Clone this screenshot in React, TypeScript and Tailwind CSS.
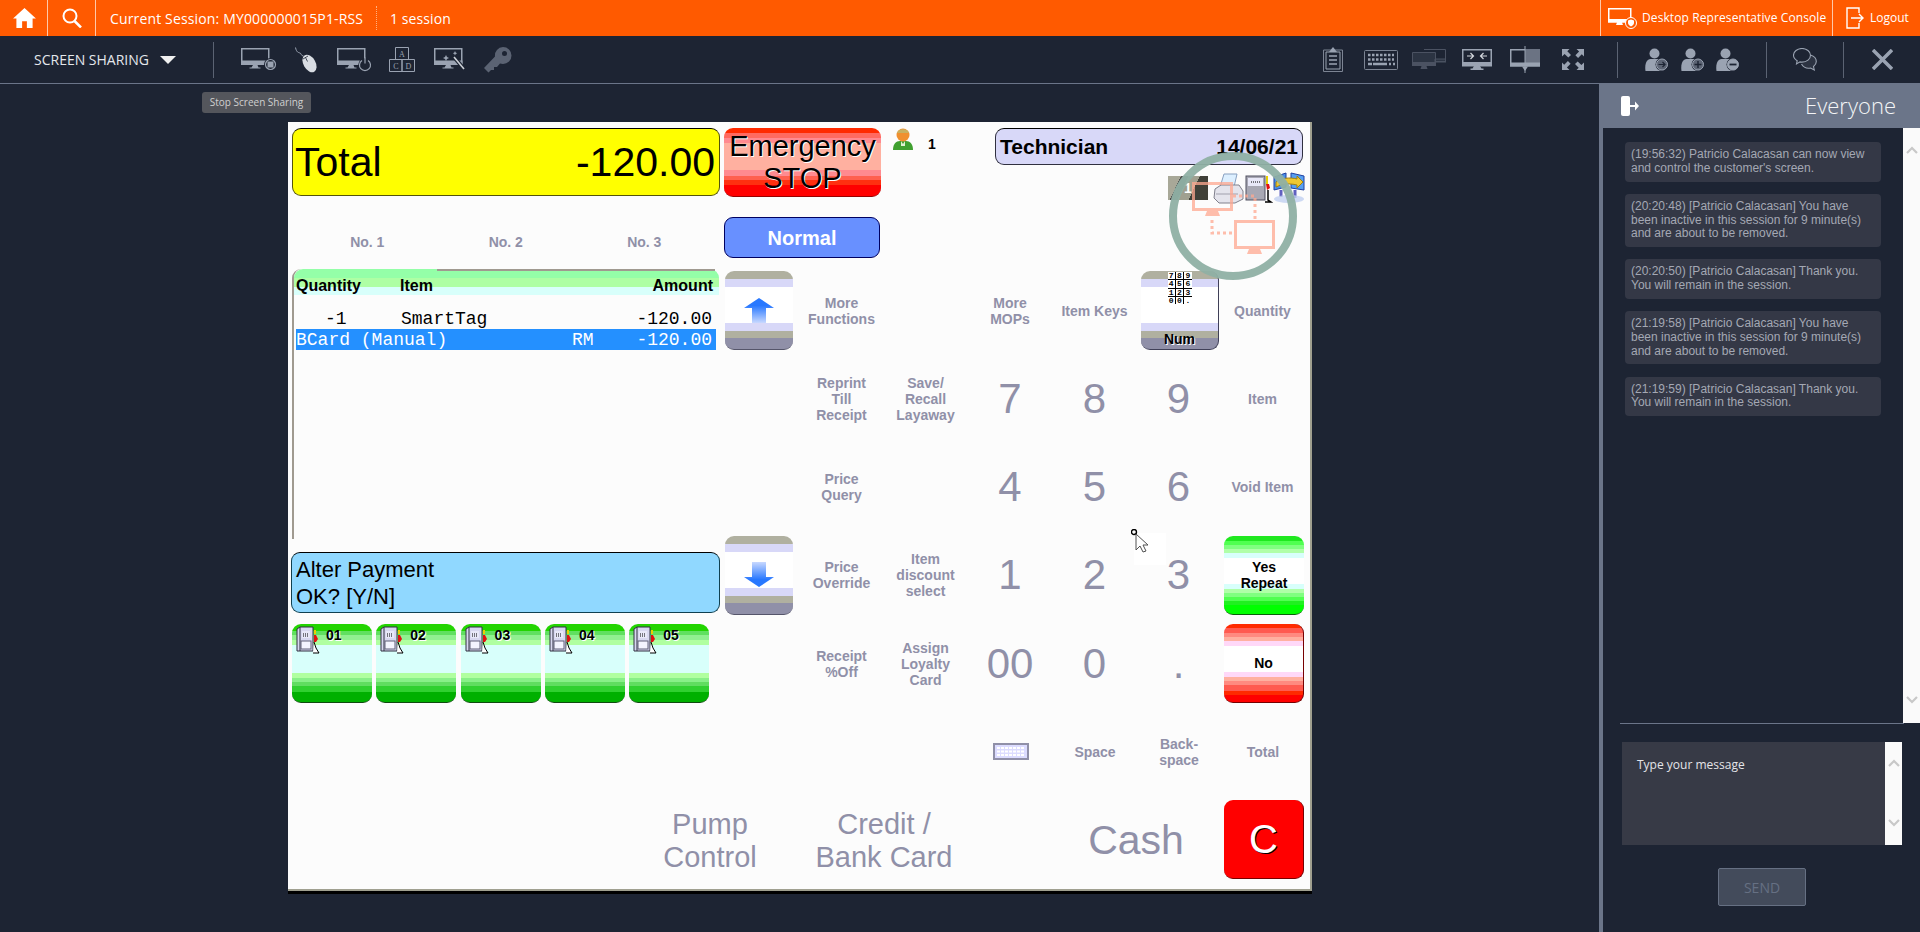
import type { ReactNode } from "react";

const IC = "#9aa3b2";
const DIM = "#4b5262";

const grayBtn =
  "bg-[linear-gradient(#b0b0a0_0_8px,#d8d8f8_8px_16px,#ffffff_16px_52px,#d8d8f8_52px_60px,#b0b0a0_60px_67px,#9090a8_67px)]";
const pumpBtn =
  "bg-[linear-gradient(#22d400_0_7px,#60e060_7px_11px,#90f090_11px_16px,#b0ffa0_16px_21px,#d8fffb_21px_49px,#b0ffa0_49px_54px,#88f088_54px_58px,#60dd60_58px_62px,#30d030_62px_68px,#00b000_68px)]";
const yesBtn =
  "bg-[linear-gradient(#20e820_0_5px,#50ff50_5px_9px,#80ff80_9px_13px,#b0ffa8_13px_17px,#d8fffb_17px_22px,#ffffff_22px_48px,#d8fffb_48px_53px,#b0ffa8_53px_57px,#80ff80_57px_61px,#50ff50_61px_65px,#20f020_65px_69px,#00ff00_69px)]";
const noBtn =
  "bg-[linear-gradient(#ff2a00_0_4px,#ff5a50_4px_9px,#ff8a80_9px_13px,#ffb0a0_13px_17px,#ffd8f8_17px_22px,#ffffff_22px_48px,#ffd8f8_48px_53px,#ffb0a0_53px_57px,#ff8a80_57px_61px,#ff5a50_61px_67px,#ff2a00_67px_71px,#ff0000_71px)]";
const stopBtn =
  "bg-[linear-gradient(#ff2a00_0_5px,#ff6a60_5px_10px,#ff8a90_10px_15px,#ffb0a0_15px_42px,#ff8a90_42px_48px,#ff6050_48px_52px,#ff3010_52px_57px,#ff0000_57px)]";

const MonitorShape = ({ color = IC }: { color?: string }) => (
  <>
    <path d="M.75.75h27v15.5H.75z" fill="none" stroke={color} strokeWidth="1.5" />
    <rect x="0" y="12.5" width="28.5" height="4.5" fill={color} />
    <path d="M12 17h4.5l1 2.5h2v1h-11v-1h2z" fill={color} />
  </>
);

const MonitorStop = () => (
  <svg width="36" height="23" viewBox="0 0 36 23" className="ml-[27px]">
    <MonitorShape />
    <circle cx="29.5" cy="16.5" r="6.5" fill="#1d2433" />
    <circle cx="29.5" cy="16.5" r="5" fill="none" stroke={IC} strokeWidth="1.2" />
    <rect x="26.5" y="13.5" width="6" height="6" fill={IC} />
  </svg>
);

const MouseIcon = () => (
  <svg width="23" height="26" viewBox="0 0 23 26" className="ml-[18px]">
    <path d="M.5.5c1 5 3 5 4.500 5.500s1 3 3.500 3" fill="none" stroke={IC} strokeWidth="1" />
    <ellipse cx="14.500" cy="16.500" rx="6" ry="9.500" transform="rotate(-30 14.500 16.500)" fill="#d9dde3" />
    <path d="M8 12l5-3M10.500 10.500l2 4" stroke="#1d2433" strokeWidth=".8" />
  </svg>
);

const MonitorPower = () => (
  <svg width="35" height="24" viewBox="0 0 35 24" className="ml-[19px]">
    <MonitorShape />
    <circle cx="28" cy="17" r="6.800" fill="#1d2433" />
    <path d="M25 12.500a5.500 5.500 0 1 0 6 0" fill="none" stroke={IC} strokeWidth="1.200" />
    <path d="M28 9.500v6" stroke={IC} strokeWidth="1.200" />
  </svg>
);

const AbcdIcon = () => (
  <svg width="26" height="25" viewBox="0 0 26 25" className="ml-[17px]" fontFamily="Liberation Serif, serif" fontSize="8" fill={IC}>
    <path d="M6.500.5h13v12h-13zM.5 12.500h12.500v12H.5zM13 12.500h12.500v12H13z" fill="none" stroke={IC} />
    <text x="13" y="9.500" textAnchor="middle">A</text>
    <text x="6.800" y="21.500" textAnchor="middle">C</text>
    <text x="19.300" y="21.500" textAnchor="middle">D</text>
  </svg>
);

const WandIcon = () => (
  <svg width="32" height="24" viewBox="0 0 32 24" className="ml-[19px]">
    <MonitorShape />
    <path d="M20 9l10 12" stroke="#1d2433" strokeWidth="4" />
    <path d="M20 9l10 12" stroke="#cdd1d8" strokeWidth="1.600" />
    <path d="M12 7l1 2 2 1-2 1-1 2-1-2-2-1 2-1zM21 3l.7 1.500 1.500.7-1.500.7-.7 1.500-.7-1.500-1.500-.7 1.500-.7z" fill={IC} />
  </svg>
);

const KeyIcon = () => (
  <svg width="28" height="26" viewBox="0 0 28 26" className="ml-[18px]">
    <path
      d="M19 0a8.500 8.500 0 0 1 0 17c-1.200 0-2-.2-3-.5L13 20h-3v3H7l-2.500 2.500L0 21l11-11.500A8.500 8.500 0 0 1 19 0zm1.500 4a2.500 2.500 0 1 0 0 5 2.500 2.500 0 0 0 0-5z"
      fill="#5b6373"
    />
  </svg>
);

const ClipboardIcon = () => (
  <svg width="20" height="25" viewBox="0 0 20 25">
    <path d="M.5 3h19v21.500H.5z" fill="none" stroke="#7c8493" />
    <path d="M3 5h14v17H3z" fill="none" stroke={IC} />
    <path d="M10 0l4 5H6z" fill={IC} />
    <path d="M6 9h8M6 13h8M6 17h8" stroke={IC} strokeWidth="1.400" />
  </svg>
);

const KeyboardIcon = () => (
  <svg width="34" height="20" viewBox="0 0 34 20" className="ml-[21px]">
    <rect x=".5" y=".5" width="33" height="19" rx="1" fill="none" stroke="#7c8493" />
    <path d="M4 5h26M4 9.500h26" stroke={IC} strokeWidth="2.500" strokeDasharray="2.500 1.500" />
    <path d="M4 14h4M9 14h14M25 14h2M29 14h2" stroke={IC} strokeWidth="2.500" />
  </svg>
);

const DualMonitor = () => (
  <svg width="34" height="21" viewBox="0 0 34 21" className="ml-[14px]">
    <path d="M12 .5h21.500v12H23" fill="none" stroke={DIM} />
    <path d="M23 10h11v3H23zM.5 3.500h23v13H.5z" fill={DIM} fillOpacity=".35" stroke={DIM} />
    <rect x="0" y="13" width="24" height="4" fill={DIM} />
    <path d="M9.500 17h5l1 3h-7z" fill={DIM} />
  </svg>
);

const CollapseMonitor = () => (
  <svg width="30" height="21" viewBox="0 0 30 21" className="ml-[16px]">
    <path d="M.75.75h28.500v15.500H.75z" fill="none" stroke={IC} strokeWidth="1.500" />
    <rect x="0" y="13" width="30" height="4.500" fill={IC} />
    <path d="M12 17h6l1.500 2.500h2v1.500H8.500v-1.500h2z" fill={IC} />
    <path d="M5 7h6M8.500 4l3 3-3 3M25 7h-6M21.500 4l-3 3 3 3" fill="none" stroke="#d4d8de" strokeWidth="1.200" />
  </svg>
);

const SplitMonitor = () => (
  <svg width="30" height="27" viewBox="0 0 30 27" className="ml-[18px]">
    <path d="M.75 3.750h28.500v16H.75z" fill="none" stroke={IC} strokeWidth="1.500" />
    <rect x="15" y="3" width="15" height="14" fill="#6b7383" />
    <rect x="0" y="16.500" width="30" height="4" fill={IC} />
    <path d="M15 0v27" stroke={IC} strokeWidth="1" />
    <path d="M12 20.500h6L15 25z" fill={IC} />
  </svg>
);

const ExpandIcon = () => (
  <svg width="22" height="21" viewBox="0 0 22 21" className="ml-[22px]" fill={IC}>
    <path d="M0 0h7.500L5.300 2.200 9 5.900 6.300 8.600 2.600 4.900 0 7.500zM22 0v7.500l-2.200-2.200-3.700 3.700-2.700-2.700 3.700-3.700L14.500 0zM0 21v-7.500l2.200 2.200 3.700-3.700 2.700 2.700-3.700 3.700L7.500 21zM22 21h-7.500l2.200-2.200-3.700-3.700 2.700-2.700 3.700 3.700 2.600-2.600z" />
  </svg>
);

const UserIcon = ({ mode, className }: { mode: "arrow" | "plus" | "minus"; className?: string }) => (
  <svg width="24" height="23" viewBox="0 0 24 23" className={className}>
    <circle cx="9.500" cy="5.500" r="5" fill={IC} />
    <path d="M.5 23c-1-7 1-11.500 5-12h8c4 .5 5 6 5 12z" fill={IC} />
    <circle cx="17" cy="16.500" r="6.500" fill="#1d2433" />
    <circle cx="17" cy="16.500" r="5.500" fill={mode === "minus" ? IC : "#5d6575"} stroke={IC} strokeWidth="1" />
    {mode === "arrow" && <path d="M13.500 16.500h6.500M17.500 14l2.500 2.500-2.500 2.500" fill="none" stroke="#1d2433" strokeWidth="1.200" />}
    {mode === "plus" && <path d="M13.500 16.500h7M17 13v7" stroke="#1d2433" strokeWidth="1.400" />}
    {mode === "minus" && <path d="M13.500 16.500h7" stroke="#1d2433" strokeWidth="1.800" />}
  </svg>
);

const ChatIcon = () => (
  <svg width="24" height="23" viewBox="0 0 24 23" className="ml-[26px]" fill="none" stroke={IC} strokeWidth="1.100">
    <path d="M17.500 7c3.300 1 5.800 3.500 5.800 6.500 0 2-1.200 3.800-2.800 5l.8 3.500-3.800-2c-4 .7-7-.5-9-4" fill="#3b4252" fillOpacity=".5" />
    <path d="M9 .5c4.700 0 8.500 3 8.500 6.800s-3.800 6.800-8.500 6.800c-.7 0-1.300 0-2-.2L3.500 16l.7-3.300C2 11.500.5 9.500.5 7.300.5 3.500 4.300.5 9 .5z" fill="#1d2433" />
  </svg>
);

const Divider = ({ className }: { className: string }) => <div className={`w-px h-9 bg-[#5b6373] ${className}`} />;

const Chevron = ({ up }: { up?: boolean }) => (
  <svg width="12" height="8" viewBox="0 0 12 8" fill="none" stroke="#c8c8c8" strokeWidth="2.200">
    <path d={up ? "M1 7l5-5 5 5" : "M1 1l5 5 5-5"} />
  </svg>
);

const TopBar = () => (
  <div className="flex h-9 shrink-0 items-center bg-[#ff5a00] text-white">
    <div className="flex h-full w-[48px] items-center border-r border-[#ffc8a8] pl-[13px]">
      <svg width="23" height="20" viewBox="0 0 24 21" fill="#fff">
        <path d="M12 0l12 11h-3.500v10h-6v-7h-5v7h-6V11H0z" />
      </svg>
    </div>
    <div className="flex h-full w-[48px] items-center border-r border-[#ffc8a8] pl-[14px]">
      <svg width="21" height="20" viewBox="0 0 21 20" fill="none" stroke="#fff">
        <circle cx="8" cy="8" r="6.500" strokeWidth="2" />
        <path d="M12.500 13l6.500 6.500" strokeWidth="2.500" />
      </svg>
    </div>
    <span className="ml-[14px] w-[252px] whitespace-nowrap text-[14px] tracking-[0.15px]">Current Session: MY000000015P1-RSS</span>
    <div className="ml-[14px] h-6 border-l border-dotted border-[#ffb080]" />
    <span className="ml-[13px] text-[14px] tracking-[0.1px]">1 session</span>
    <div className="ml-auto flex h-full w-[232px] items-center border-l border-[#ffc8a8] pl-[7px]">
      <svg width="29" height="21" viewBox="0 0 29 21" fill="none" stroke="#fff">
        <path d="M.75.75h22v13H.75z" strokeWidth="1.500" />
        <path d="M0 11h23v3.500H0zM9 14.500h5l1 2.500H8z" fill="#fff" stroke="none" />
        <circle cx="23" cy="15" r="5.500" fill="#ff5a00" />
        <path d="M23 11.500l3 1v2.500c0 1.500-1.500 2.500-3 3.500-1.500-1-3-2-3-3.500v-2.500z" fill="#fff" stroke="none" />
      </svg>
      <span className="ml-[5px] w-[186px] whitespace-nowrap text-[12px] tracking-[0.1px]">Desktop Representative Console</span>
    </div>
    <div className="flex h-full w-[88px] items-center border-l border-[#ffc8a8] pl-[13px]">
      <svg width="18" height="22" viewBox="0 0 18 22" fill="none" stroke="#fff" strokeWidth="1.400">
        <path d="M13 6V1H1v20h12v-5M5 11h12M13 7l4 4-4 4" />
      </svg>
      <span className="ml-[6px] text-[12px]">Logout</span>
    </div>
  </div>
);

const ToolBar = () => (
  <div className="flex h-[48px] shrink-0 items-center border-b border-[#6b7589] bg-[#1d2433]">
    <span className="ml-[34px] w-[116px] whitespace-nowrap text-[14px] text-[#e4e7ec]">SCREEN SHARING</span>
    <svg width="16" height="8" viewBox="0 0 16 8" className="ml-[10px]">
      <path d="M0 0h16l-8 8z" fill="#f0f0f0" />
    </svg>
    <Divider className="ml-[37px]" />
    <MonitorStop />
    <MouseIcon />
    <MonitorPower />
    <AbcdIcon />
    <WandIcon />
    <KeyIcon />
    <div className="ml-auto flex items-center pr-[27px]">
      <ClipboardIcon />
      <KeyboardIcon />
      <DualMonitor />
      <CollapseMonitor />
      <SplitMonitor />
      <ExpandIcon />
      <Divider className="ml-[33px]" />
      <UserIcon mode="arrow" className="ml-[27px]" />
      <UserIcon mode="plus" className="ml-[12px]" />
      <UserIcon mode="minus" className="ml-[11px]" />
      <Divider className="ml-[26px]" />
      <ChatIcon />
      <Divider className="ml-[26px]" />
      <svg width="21" height="21" viewBox="0 0 21 21" className="ml-[28px]" stroke={IC} strokeWidth="3.500">
        <path d="M1 1l19 19M20 1L1 20" />
      </svg>
    </div>
  </div>
);

const Label = ({ children }: { children: ReactNode }) => (
  <div className="flex items-center justify-center text-center text-[14px] font-bold leading-4 text-[#9090a8]">{children}</div>
);

const Digit = ({ children }: { children: ReactNode }) => (
  <div className="flex items-center justify-center text-[42px] leading-none text-[#9090a8]">{children}</div>
);

const ArrowButton = ({ up }: { up?: boolean }) => (
  <div className={`ml-[4px] flex h-[79px] w-[68px] items-center justify-center rounded-[9px] border-b border-[#55556a] ${grayBtn}`}>
    <svg width="32" height="26" viewBox="0 0 32 26">
      <defs>
        <linearGradient id={up ? "arrowUp" : "arrowDown"} x1="0" y1={up ? "0" : "1"} x2="0" y2={up ? "1" : "0"}>
          <stop offset=".3" stopColor="#2878ff" />
          <stop offset="1" stopColor="#c8d8ff" />
        </linearGradient>
      </defs>
      <path
        d={up ? "M16 1l15 10H23v15H9V11H1z" : "M16 25L31 15H23V0H9v15H1z"}
        fill={`url(#${up ? "arrowUp" : "arrowDown"})`}
      />
    </svg>
  </div>
);

const NumPad = () => (
  <div className="grid h-[32px] w-[24px] grid-cols-3 gap-px bg-black font-['Liberation_Mono',monospace] text-[8px] font-bold leading-[7px]">
    {["7", "8", "9", "4", "5", "6", "1", "2", "3", "0", "0", "."].map((k, i) => (
      <span key={i} className="bg-white text-center text-black">
        {k}
      </span>
    ))}
  </div>
);

const PumpIcon = () => (
  <svg width="25" height="28" viewBox="0 0 25 28">
    <path d="M1 3l3-2h13v24H1z" fill="#d8d8f0" stroke="#303040" />
    <path d="M4 1v24" stroke="#303040" />
    <rect x="6" y="5" width="8" height="7" fill="#e8e8f8" />
    <path d="M7 8h1M9 8h1M11 8h1M7 10h1M9 10h1M11 10h1" stroke="#000" />
    <rect x="5" y="15" width="10" height="8" fill="#f4f4ff" stroke="#606078" />
    <path d="M18 9h2l2 4-2 3h-2z" fill="#e01010" />
    <path d="M19 4v4" stroke="#e8d000" strokeWidth="2" />
    <path d="M18 16l2 6 3 5h-6" fill="#fff" stroke="#000" />
  </svg>
);

const PumpButton = ({ n }: { n: string }) => (
  <div className={`flex h-[79px] w-[80px] items-start rounded-[9px] border-b border-[#0f4a0f] pl-[4px] pt-[2px] ${pumpBtn}`}>
    <PumpIcon />
    <span className="ml-[5px] mt-[1px] text-[14px] font-bold leading-4 text-black [text-shadow:1px_1px_0_#fff]">{n}</span>
  </div>
);

const TrayIcons = () => (
  <div className="mt-[7px] -mr-[2px] flex items-center justify-end">
    <div className="flex h-[24px] w-[40px] items-center justify-center bg-[linear-gradient(115deg,#a8a898_0_25%,#505050_25%_40%,#a0a090_40%_62%,#404038_62%)] text-[14px] font-bold text-white">
      1
    </div>
    <svg width="31" height="31" viewBox="0 0 31 31" className="ml-[5px]">
      <path d="M11 1h13l-3 13H7z" fill="#dcefff" stroke="#88a0c0" />
      <path d="M2 16l6-4h18l4 6v8l-8 4H6l-5-5z" fill="#e4e4ec" stroke="#80808c" />
      <path d="M3 21h22" stroke="#a0a0ac" />
    </svg>
    <svg width="28" height="30" viewBox="0 0 28 30" className="ml-[1px]">
      <rect x="1" y="3" width="19" height="24" fill="#a8a8b4" stroke="#505060" />
      <rect x="3" y="5" width="15" height="8" fill="#e8e8f8" />
      <path d="M6 9h9" stroke="#000" strokeDasharray="1 1" />
      <path d="M22 3v8" stroke="#e8d000" strokeWidth="2" />
      <path d="M21 11h3l1 4-3 2z" fill="#e01010" />
      <path d="M23 17v10l3 2h-6" fill="none" stroke="#000" strokeWidth="1.500" />
    </svg>
    <svg width="32" height="32" viewBox="0 0 32 32">
      <path d="M1 5l12-4v14L1 18z" fill="#4a90e8" stroke="#2040a0" />
      <path d="M18 1l13 3v14l-13-2z" fill="#58a0f0" stroke="#2040a0" />
      <path d="M3 10c5-4 14-5 21-3V4l6 6-6 6v-3c-8-2-15-1-21 2z" fill="#f0c830" stroke="#a08010" />
      <path d="M8 18v7M22 18v8" stroke="#6060c0" strokeWidth="3" />
      <ellipse cx="16" cy="27" rx="15" ry="4" fill="#c0d0f0" fillOpacity=".8" />
    </svg>
  </div>
);

const SessionOverlay = () => (
  <svg width="136" height="136" viewBox="0 0 136 136" className="pointer-events-none absolute left-[877px] top-[26px]">
    <circle cx="68" cy="68" r="60" fill="none" stroke="#8fb0a4" strokeWidth="8" strokeOpacity=".95" />
    <g opacity=".75">
      <path d="M28.500 35.500h38v26h-38z" fill="none" stroke="#ffa890" strokeWidth="3" />
      <path d="M42 63h11l2 5H40z" fill="#ffa890" />
      <path d="M70.500 73.500h38v26h-38z" fill="none" stroke="#ffa890" strokeWidth="3" />
      <path d="M84 101h11l2 5H82z" fill="#ffa890" />
      <path d="M47 72v13h21M68 48h22v24" fill="none" stroke="#ffa890" strokeWidth="3" strokeDasharray="3 3" />
    </g>
  </svg>
);

const CursorOverlay = () => (
  <div className="pointer-events-none absolute left-[846px] top-[411px] h-[32px] w-[32px] bg-white">
    <svg width="24" height="28" viewBox="0 0 24 28" className="absolute -left-[3px] -top-[4px]">
      <circle cx="3" cy="3" r="2.500" fill="none" stroke="#000" strokeWidth="1.400" />
      <path d="M5 5v16l4-4 3 6 3-1-3-6h5z" fill="#fff" stroke="#505050" strokeWidth="1" />
    </svg>
  </div>
);

const PosScreen = () => (
  <div className="relative h-[769px] w-[1024px] border-b-2 border-r-2 border-b-[#a0a090] border-r-[#a0a090] bg-[#fcfcfc] pl-[4px] pt-[6px] font-['Liberation_Sans',Arial,sans-serif] shadow-[0_3px_0_#000]">
    <div className="flex h-[141px]">
      <div className="w-[428px]">
        <div className="flex h-[68px] items-center justify-between rounded-[9px] border border-[#55550a] border-t-black bg-[#ffff00] pl-[2px] pr-[4px] pt-[2px] text-[41px] text-black">
          <span>Total</span>
          <span>-120.00</span>
        </div>
        <div className="mt-[38px] grid h-4 grid-cols-[repeat(3,138.5px)] pl-[6px] text-center text-[14px] font-bold leading-4 text-[#9090a8]">
          <span>No. 1</span>
          <span>No. 2</span>
          <span>No. 3</span>
        </div>
      </div>
      <div className="ml-[4px] w-[157px]">
        <div className={`h-[69px] rounded-[9px] border-b border-[#900] pt-[2px] text-center text-[29px] leading-[32px] text-black [text-shadow:1px_1px_0_#fff] ${stopBtn}`}>
          Emergency
          <br />
          STOP
        </div>
        <div className="mt-[20px] flex h-[41px] w-[156px] items-center justify-center rounded-[9px] border border-[#000060] bg-[#6890ff] text-[20px] font-bold text-white">
          Normal
        </div>
      </div>
      <svg width="20" height="24" viewBox="0 0 20 24" className="ml-[12px] -mt-[1px]">
        <path d="M0 23c0-6 3-9 7-9h6c4 0 7 3 7 9z" fill="#40a030" />
        <path d="M8 14l2 3 2-3v5H8z" fill="#e0f0d0" />
        <circle cx="10" cy="8" r="6.500" fill="#f09030" />
        <path d="M4 6c1-5 11-5 12 0" fill="#c8b060" />
      </svg>
      <span className="ml-[15px] mt-[8px] h-4 w-2 text-[14px] font-bold leading-4 text-black">1</span>
      <div className="ml-[59px] w-[308px]">
        <div className="flex h-[37px] items-center justify-between rounded-[9px] border border-[#303040] border-t-black bg-[#d8d8f8] px-[4px] text-[21px] font-bold text-black">
          <span>Technician</span>
          <span>14/06/21</span>
        </div>
        <TrayIcons />
      </div>
    </div>

    <div className="flex">
      <div className="w-[429px]">
        <div className="h-[270px] rounded-tl-[9px] border-l-2 border-[#a09a90]">
          <div className="relative h-[26px] w-[425px] rounded-t-[9px] bg-[linear-gradient(#94ffa8_0_9px,#aeffa4_9px_18px,#d8fffb_18px)] text-[16px] font-bold text-black">
            <div className="absolute left-[143px] right-[4px] top-0 h-[2px] bg-[#a09a90]" />
            <span className="absolute left-[2px] top-[8px] leading-[18px]">Quantity</span>
            <span className="absolute left-[106px] top-[8px] leading-[18px]">Item</span>
            <span className="absolute right-[6px] top-[8px] leading-[18px]">Amount</span>
          </div>
          <div className="ml-[2px] mt-[13px] w-[420px] font-['Liberation_Mono',monospace] text-[18px] leading-[21px]">
            <div className="flex h-[21px] pt-px text-black">
              <span className="w-[105px] pl-[29px]">-1</span>
              <span>SmartTag</span>
              <span className="ml-auto pr-[4px]">-120.00</span>
            </div>
            <div className="flex h-[21px] bg-[#2490ff] pt-px text-white">
              <span className="w-[276px]">BCard (Manual)</span>
              <span>RM</span>
              <span className="ml-auto pr-[4px]">-120.00</span>
            </div>
          </div>
        </div>
        <div className="-ml-px mt-[13px] h-[61px] w-[429px] rounded-[9px] border border-[#104050] border-t-black bg-[#90d8ff] pl-[4px] pt-[3px] text-[22px] leading-[27px] text-black">
          Alter Payment
          <br />
          OK? [Y/N]
        </div>
        <div className="mt-[11px] flex gap-[4.300px]">
          {["01", "02", "03", "04", "05"].map((n) => (
            <PumpButton key={n} n={n} />
          ))}
        </div>
      </div>

      <div className="mt-[2px] grid grid-cols-[78.5px_84px_84px_85px_84px_84px_84px] grid-rows-[repeat(5,79px)] gap-y-[9.250px]">
        <ArrowButton up />
        <Label>More<br />Functions</Label>
        <div />
        <Label>More<br />MOPs</Label>
        <Label>Item Keys</Label>
        <div className={`ml-[4.500px] flex h-[79px] w-[78px] flex-col items-center rounded-[9px] border-b border-r border-[#404058] pt-px ${grayBtn}`}>
          <NumPad />
          <span className="mt-[27px] text-[14px] font-bold leading-4 text-black [text-shadow:1px_1px_0_#fff]">Num</span>
        </div>
        <Label>Quantity</Label>

        <div />
        <Label>Reprint<br />Till<br />Receipt</Label>
        <Label>Save/<br />Recall<br />Layaway</Label>
        <Digit>7</Digit>
        <Digit>8</Digit>
        <Digit>9</Digit>
        <Label>Item</Label>

        <div />
        <Label>Price<br />Query</Label>
        <div />
        <Digit>4</Digit>
        <Digit>5</Digit>
        <Digit>6</Digit>
        <Label>Void Item</Label>

        <ArrowButton />
        <Label>Price<br />Override</Label>
        <Label>Item<br />discount<br />select</Label>
        <Digit>1</Digit>
        <Digit>2</Digit>
        <Digit>3</Digit>
        <div className={`ml-[3.500px] flex h-[79px] w-[80px] items-center justify-center rounded-[9px] border-b border-[#0a600a] text-center text-[14px] font-bold leading-4 text-black ${yesBtn}`}>
          Yes<br />Repeat
        </div>

        <div />
        <Label>Receipt<br />%Off</Label>
        <Label>Assign<br />Loyalty<br />Card</Label>
        <Digit>00</Digit>
        <Digit>0</Digit>
        <Digit>.</Digit>
        <div className={`ml-[3.500px] flex h-[79px] w-[80px] items-center justify-center rounded-[9px] border-b border-r border-[#700] text-[14px] font-bold leading-4 text-black ${noBtn}`}>
          No
        </div>
      </div>
    </div>

    <div className="mt-[9px] grid h-[79px] grid-cols-[repeat(4,84px)] pl-[677px]">
      <div className="flex items-center justify-center">
        <svg width="36" height="17" viewBox="0 0 36 17">
          <rect x="1" y="1" width="34" height="15" fill="#dcdcff" stroke="#9090a8" strokeWidth="2" />
          <path d="M4 5h28M4 8.500h28M4 12h28" stroke="#ffffff" strokeWidth="2" strokeDasharray="3 1" />
        </svg>
      </div>
      <Label>Space</Label>
      <Label>Back-<br />space</Label>
      <Label>Total</Label>
    </div>

    <div className="mt-[9px] flex h-[79px] items-center text-center text-[#9090a8]">
      <div className="ml-[328px] w-[180px] pt-[2px] text-[29px] leading-[33px]">Pump<br />Control</div>
      <div className="w-[168px] pt-[2px] text-[29px] leading-[33px]">Credit /<br />Bank Card</div>
      <div className="ml-[80px] w-[176px] pt-[2px] text-[41px] leading-none">Cash</div>
      <div className="flex h-[79px] w-[80px] items-center justify-center rounded-[9px] border-b border-r border-[#700] bg-[#ff0000] text-[40px] leading-none text-white [text-shadow:1px_1px_0_#000]">
        C
      </div>
    </div>

    <SessionOverlay />
    <CursorOverlay />
  </div>
);

const messages = [
  ["(19:56:32) Patricio Calacasan can now view", "and control the customer's screen."],
  ["(20:20:48) [Patricio Calacasan] You have", "been inactive in this session for 9 minute(s)", "and are about to be removed."],
  ["(20:20:50) [Patricio Calacasan] Thank you.", "You will remain in the session."],
  ["(21:19:58) [Patricio Calacasan] You have", "been inactive in this session for 9 minute(s)", "and are about to be removed."],
  ["(21:19:59) [Patricio Calacasan] Thank you.", "You will remain in the session."],
];

const ChatPanel = () => (
  <div className="flex w-[321px] shrink-0 flex-col border-l-4 border-[#6b7589] bg-[#1d2433]">
    <div className="-ml-px flex h-[44px] shrink-0 items-center justify-between bg-[#6b7589] pl-[19px] pr-[24px] text-[#f4f5f7]">
      <svg width="18" height="20" viewBox="0 0 18 20" fill="#fff">
        <rect x="0" y="0" width="9" height="20" rx="2" />
        <path d="M9 9h5V5.500l4 4.500-4 4.500V11H9z" />
      </svg>
      <span className="pb-[2px] text-[22px] font-light">Everyone</span>
    </div>
    <div className="flex h-[595px] shrink-0">
      <div className="flex w-[300px] flex-col gap-[12.250px] pl-[22px] pt-[14px]">
        {messages.map((lines, i) => (
          <div key={i} className="w-[256px] rounded bg-[#343846] px-[6px] py-[6px] font-['Liberation_Sans',Arial,sans-serif] text-[12px] leading-[13.750px] text-[#a4a8b4]">
            {lines.map((l) => (
              <div key={l} className="whitespace-nowrap">
                {l}
              </div>
            ))}
          </div>
        ))}
      </div>
      <div className="flex w-[17px] flex-col items-center justify-between bg-[#fafafa] pb-[19px] pt-[18px]">
        <Chevron up />
        <Chevron />
      </div>
    </div>
    <div className="ml-[17px] h-px w-[284px] bg-[#6b7589]" />
    <div className="ml-[19px] mt-[18px] flex h-[103px] w-[280px]">
      <div className="w-[263px] bg-[#373a46] pl-[15px] pt-[15px] text-[12px] leading-4 text-[#e4e4e8]">Type your message</div>
      <div className="flex w-[17px] flex-col items-center justify-between bg-[#fafafa] pb-[18px] pt-[17px]">
        <Chevron up />
        <Chevron />
      </div>
    </div>
    <div className="ml-[115px] mt-[23px] flex h-[38px] w-[88px] items-center justify-center rounded-[2px] border border-[#667083] bg-[#434b5b] text-[14px] text-[#667083]">
      SEND
    </div>
  </div>
);

export default function App() {
  return (
    <div className="relative flex h-[932px] w-[1920px] flex-col overflow-hidden bg-[#1d2433] font-['Open_Sans',sans-serif]">
      <TopBar />
      <ToolBar />
      <div className="flex min-h-0 flex-1">
        <div className="w-[1599px] shrink-0 pl-[288px] pt-[38px]">
          <PosScreen />
        </div>
        <ChatPanel />
      </div>
      <div className="absolute left-[202px] top-[92px] flex h-[21px] w-[109px] items-center justify-center rounded-[3px] bg-[#54565c] text-[10px] text-[#d0d0d0]">
        Stop Screen Sharing
      </div>
    </div>
  );
}
